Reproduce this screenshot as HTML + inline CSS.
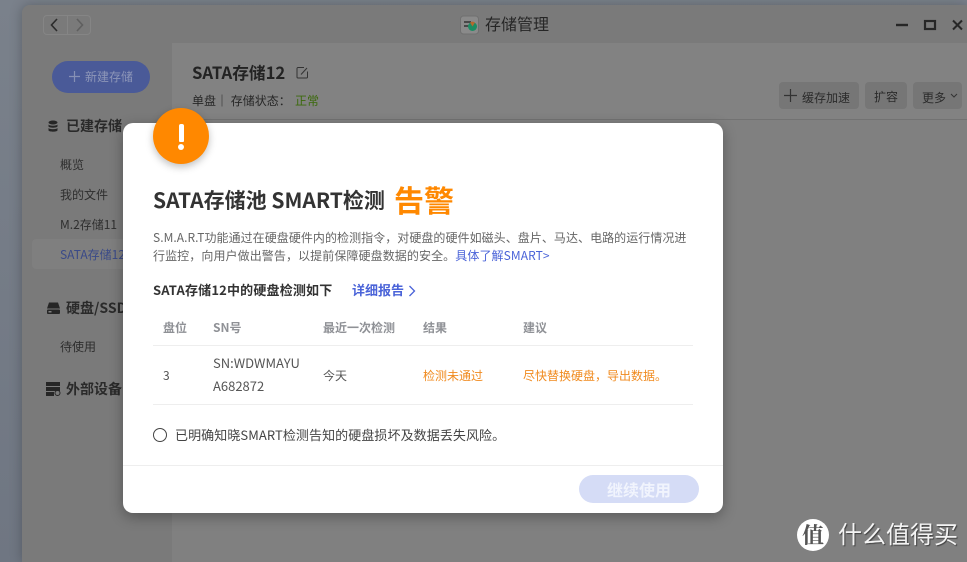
<!DOCTYPE html>
<html lang="zh">
<head>
<meta charset="utf-8">
<title>存储管理</title>
<style>
html,body{margin:0;padding:0}
body{width:967px;height:562px;overflow:hidden;position:relative;background:#737a84;font-family:"Noto Sans CJK SC","Liberation Sans",sans-serif;color:#333}
.a{position:absolute;white-space:nowrap}
#bg{left:0;top:0;width:967px;height:562px;background:linear-gradient(180deg,#7a818b 0,#6f7682 100%)}
#win{left:22px;top:5px;width:945px;height:557px;background:#7f7f7f;border-radius:8px 0 0 0;box-shadow:0 0 12px rgba(0,0,0,.25)}
#bar{left:22px;top:5px;width:945px;height:38px;background:#7a7a7a;border-radius:8px 0 0 0}
#side{left:22px;top:43px;width:150px;height:519px;background:#7a7a7a}
#main{left:172px;top:43px;width:795px;height:519px;background:#808080}
#head{left:172px;top:43px;width:795px;height:76px;background:#828282;border-bottom:1px solid #727272}
.nav{color:#2e2e2e;font-size:12px;line-height:16px}
.grp{color:#2a2a2a;font-size:14px;font-weight:bold;line-height:20px}
.btn{background:#767676;border-radius:4px;height:27px;top:82px;font-size:12px;line-height:29px;color:#2b2b2b;text-align:center}
#modal{left:123px;top:123px;width:600px;height:390px;background:#fff;border-radius:10px;box-shadow:0 4px 14px rgba(0,0,0,.3)}
.th{font-size:12px;line-height:16px;color:#8f9196;font-weight:bold;top:320px}
.td{font-size:12px;line-height:16px;color:#555}
.or{color:#f08a1e}
.ln{height:1px;background:#eeeeee}
</style>
</head>
<body>
<div class="a" id="bg"></div>
<div class="a" id="win"></div>
<div class="a" id="bar"></div>
<div class="a" id="side"></div>
<div class="a" id="main"></div>
<div class="a" id="head"></div>

<div class="a" style="left:43px;top:15px;width:48px;height:20px;border:1px solid #858585;border-radius:4px;box-sizing:border-box"></div>
<div class="a" style="left:67px;top:15px;width:1px;height:20px;background:#858585"></div>
<svg class="a" style="left:43px;top:15px" width="48" height="20" viewBox="0 0 48 20" fill="none"><path d="M14 4 L8.500 10 L14 16" stroke="#2c2c2c" stroke-width="1.600"/><path d="M34 4 L39.500 10 L34 16" stroke="#5f5f5f" stroke-width="1.600"/></svg>

<svg class="a" style="left:460px;top:15px" width="20" height="20" viewBox="0 0 20 20"><rect x="0.500" y="1" width="18" height="18" rx="3" fill="#8a8a8a" stroke="#707070"/><path d="M4 7h7M4 11h5" stroke="#333" stroke-width="1.400"/><circle cx="12.500" cy="11.500" r="4.500" fill="#1d8c63"/><path d="M10 7.500a4.500 4.500 0 0 1 5 0l-2.500 4z" fill="#b5682e"/></svg>
<div class="a" style="left:485px;top:12px;font-size:16px;line-height:22px;color:#262626">存储管理</div>
<svg class="a" style="left:890px;top:15px" width="77" height="20" viewBox="0 0 77 20" fill="none"><path d="M6 10h12" stroke="#272727" stroke-width="2.400"/><rect x="35" y="6" width="10" height="8" stroke="#272727" stroke-width="2.200"/><path d="M63 5.500l9 9M72 5.500l-9 9" stroke="#272727" stroke-width="2"/></svg>

<div class="a" style="left:52px;top:61px;width:98px;height:32px;background:#4a5a98;border-radius:16px"></div>
<svg class="a" style="left:69px;top:71px" width="11" height="11" viewBox="0 0 11 11"><path d="M5.500 0v11M0 5.500h11" stroke="#8690b5" stroke-width="1.200"/></svg>
<div class="a" style="left:85px;top:69px;font-size:12px;line-height:16px;color:#8d96b8">新建存储</div>
<svg class="a" style="left:47px;top:120px" width="12" height="13" viewBox="0 0 12 13"><ellipse cx="6" cy="2.500" rx="4.500" ry="2" fill="#262626"/><path d="M1.500 4.500c1 1.600 8 1.600 9 0v2c-1 1.600-8 1.600-9 0zM1.500 8c1 1.600 8 1.600 9 0v2.500c-1 1.600-8 1.600-9 0z" fill="#262626"/></svg>
<div class="a grp" style="left:66px;top:116px">已建存储</div>
<div class="a nav" style="left:60px;top:157px">概览</div>
<div class="a nav" style="left:60px;top:187px">我的文件</div>
<div class="a nav" style="left:60px;top:217px">M.2存储11</div>
<div class="a" style="left:32px;top:239px;width:100px;height:30px;background:#7f7f7f;border-radius:4px"></div>
<div class="a nav" style="left:60px;top:247px;color:#3a4a88">SATA存储12</div>
<svg class="a" style="left:46px;top:301px" width="15" height="14" viewBox="0 0 15 14"><path d="M3 1.500h9l2 6H1z" fill="#262626"/><rect x="1" y="8.500" width="13" height="4.500" rx="1" fill="#262626"/><rect x="2.500" y="10" width="3" height="1.500" fill="#808080"/></svg>
<div class="a grp" style="left:66px;top:298px">硬盘/SSD</div>
<div class="a nav" style="left:60px;top:339px">待使用</div>
<svg class="a" style="left:46px;top:382px" width="15" height="15" viewBox="0 0 15 15"><rect x="0" y="0" width="14" height="4" fill="#262626"/><rect x="0" y="5" width="14" height="4" fill="#262626"/><rect x="0" y="10" width="8" height="4" fill="#262626"/><circle cx="11.500" cy="11" r="2.500" fill="#7a7a7a" stroke="#262626"/></svg>
<div class="a grp" style="left:66px;top:379px">外部设备</div>

<div class="a" style="left:192px;top:61px;font-size:16.700px;line-height:22px;font-weight:bold;color:#232323">SATA存储12</div>
<svg class="a" style="left:296px;top:66px" width="13" height="13" viewBox="0 0 13 13" fill="none"><path d="M11.500 5.500V11a1 1 0 0 1-1 1H2a1 1 0 0 1-1-1V2.500a1 1 0 0 1 1-1h6" stroke="#333" stroke-width="1"/><path d="M5 8.500L11 2" stroke="#333"/></svg>
<div class="a" style="left:192px;top:93px;font-size:12px;line-height:16px;color:#272727">单盘｜ 存储状态：</div>
<div class="a" style="left:295px;top:93px;font-size:12px;line-height:16px;color:#3c6a0c">正常</div>
<div class="a btn" style="left:779px;width:80px"></div>
<svg class="a" style="left:784px;top:89px" width="13" height="13" viewBox="0 0 13 13"><path d="M6.500 0v13M0 6.500h13" stroke="#333" stroke-width="1.200"/></svg>
<div class="a" style="left:802px;top:90px;font-size:12px;line-height:16px;color:#2b2b2b">缓存加速</div>
<div class="a btn" style="left:865px;width:42px">扩容</div>
<div class="a btn" style="left:913px;width:49px"></div>
<div class="a" style="left:922px;top:90px;font-size:12px;line-height:16px;color:#2b2b2b">更多</div>
<svg class="a" style="left:950px;top:93px" width="8" height="6" viewBox="0 0 8 6" fill="none"><path d="M1 1l3 3 3-3" stroke="#333"/></svg>

<div class="a" id="modal"></div>
<div class="a" style="left:153px;top:108px;width:56px;height:56px;background:#ff8800;border-radius:50%;box-shadow:0 3px 8px rgba(0,0,0,.25)"></div>
<div class="a" style="left:179px;top:124px;width:5px;height:18px;background:#fff;border-radius:2px 2px 1px 1px"></div>
<div class="a" style="left:178px;top:144px;width:6px;height:6px;background:#fff;border-radius:50%"></div>

<div class="a" style="left:153px;top:186px;font-size:21px;line-height:28px;font-weight:bold;color:#333">SATA存储池 SMART检测</div>
<div class="a" style="left:394px;top:178px;font-size:30px;line-height:42px;font-weight:bold;color:#ff8800">告警</div>
<div class="a" style="left:153px;top:230px;font-size:12px;line-height:16px;color:#666;letter-spacing:.05px">S.M.A.R.T功能通过在硬盘硬件内的检测指令，对硬盘的硬件如磁头、盘片、马达、电路的运行情况进</div>
<div class="a" style="left:153px;top:248px;font-size:12px;line-height:16px;color:#666;letter-spacing:.09px">行监控，向用户做出警告，以提前保障硬盘数据的安全。<span style="color:#4a63d8">具体了解SMART&gt;</span></div>
<div class="a" style="left:153px;top:282px;font-size:13px;line-height:16px;font-weight:bold;color:#333;letter-spacing:.17px">SATA存储12中的硬盘检测如下</div>
<div class="a" style="left:352px;top:282px;font-size:13px;line-height:16px;font-weight:bold;color:#4a63d8">详细报告</div>
<svg class="a" style="left:408px;top:285px" width="8" height="12" viewBox="0 0 8 12" fill="none"><path d="M1.500 1l5 5-5 5" stroke="#4a63d8" stroke-width="1.300"/></svg>

<div class="a th" style="left:163px">盘位</div>
<div class="a th" style="left:213px">SN号</div>
<div class="a th" style="left:323px">最近一次检测</div>
<div class="a th" style="left:423px">结果</div>
<div class="a th" style="left:523px">建议</div>
<div class="a ln" style="left:153px;top:345px;width:540px"></div>
<div class="a td" style="left:163px;top:368px">3</div>
<div class="a td" style="left:213px;top:355px;font-size:13px">SN:WDWMAYU</div>
<div class="a td" style="left:213px;top:378px;font-size:13px">A682872</div>
<div class="a td" style="left:323px;top:368px">今天</div>
<div class="a td or" style="left:423px;top:368px">检测未通过</div>
<div class="a td or" style="left:523px;top:368px">尽快替换硬盘，导出数据。</div>
<div class="a ln" style="left:153px;top:404px;width:540px"></div>

<div class="a" style="left:153px;top:428px;width:14px;height:14px;border:1px solid #444;border-radius:50%;box-sizing:border-box"></div>
<div class="a" style="left:175px;top:427px;font-size:13px;line-height:16px;color:#444;letter-spacing:.08px">已明确知晓SMART检测告知的硬盘损坏及数据丢失风险。</div>
<div class="a ln" style="left:123px;top:465px;width:600px"></div>
<div class="a" style="left:579px;top:475px;width:120px;height:28px;background:#d5dcf6;border-radius:14px;text-align:center;font-size:16px;font-weight:bold;line-height:28px;color:#f1f4fd">继续使用</div>

<div class="a" style="left:797px;top:519px;width:32px;height:32px;background:#fff;border-radius:50%;text-align:center;font-size:22px;line-height:31px;font-family:'Noto Serif CJK SC',serif;font-weight:bold;color:#555">值</div>
<div class="a" style="left:838px;top:517px;font-size:24px;line-height:32px;color:#f4f4f4;text-shadow:1px 1px 1px rgba(0,0,0,.5)">什么值得买</div>
</body>
</html>
